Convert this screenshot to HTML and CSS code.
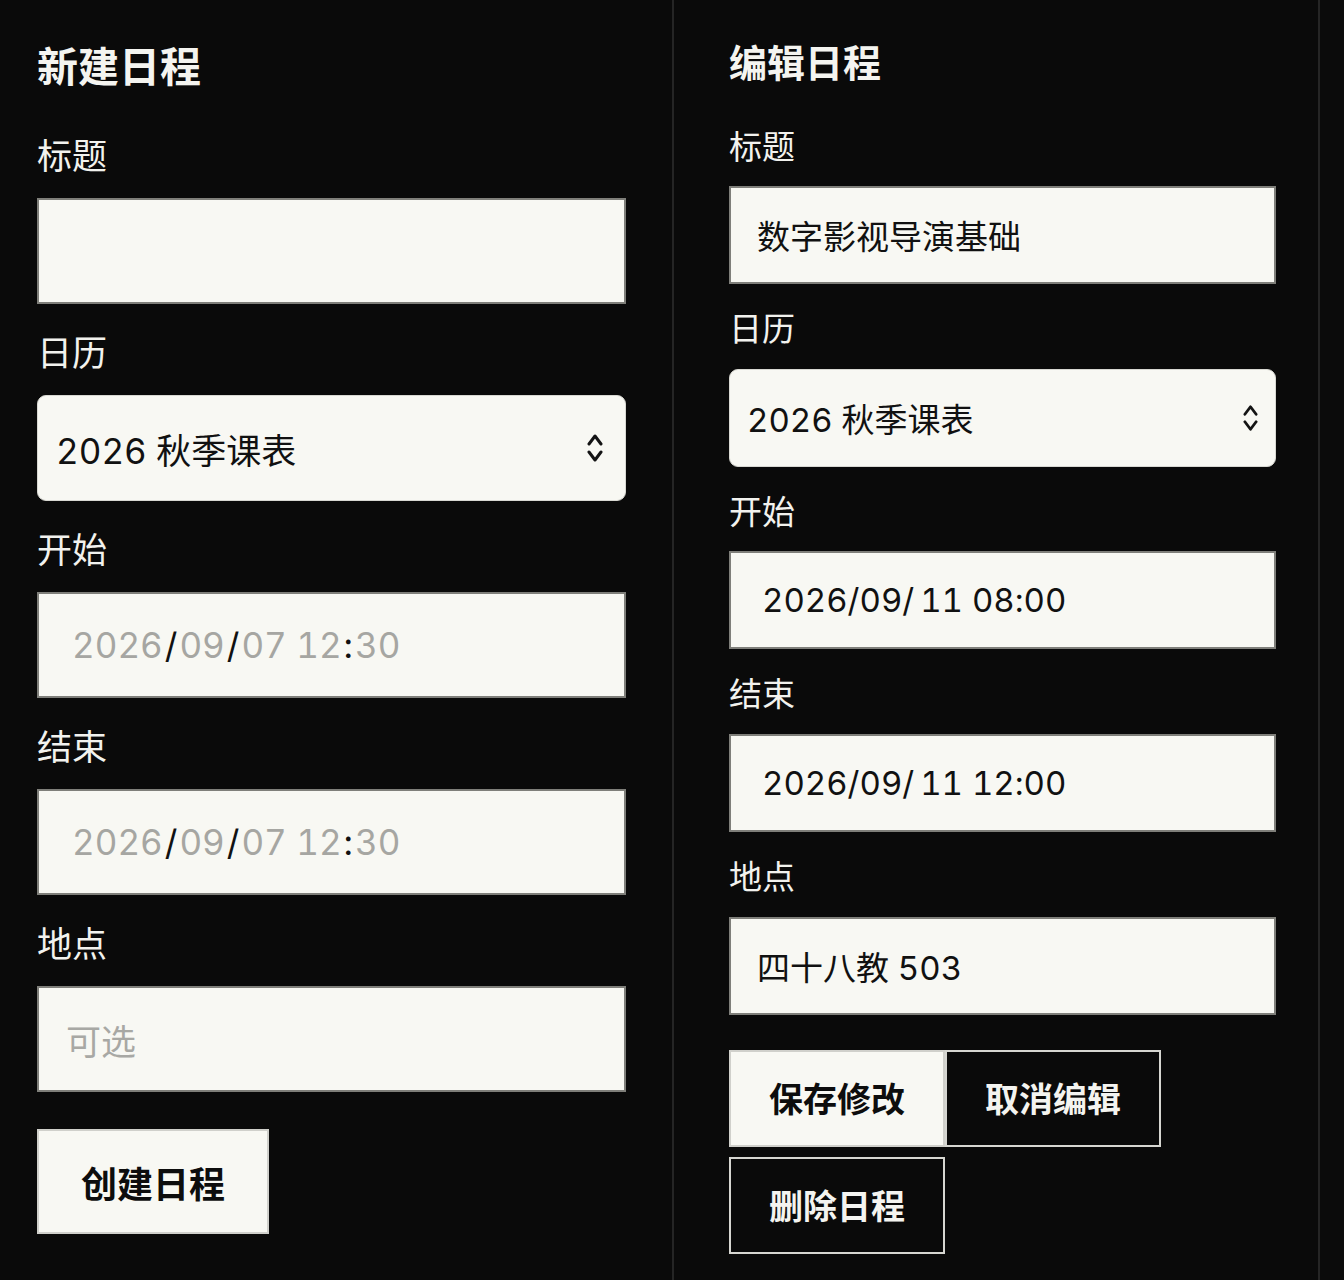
FILE: index.html
```html
<!DOCTYPE html>
<html lang="zh-CN">
<head>
<meta charset="utf-8">
<title>日程</title>
<link rel="stylesheet" href="styles.css">
</head>
<body>
<main class="page">
  <section class="panel panel-new">
    <h2 class="panel-title">新建日程</h2>
    <div class="form">
      <div class="field">
        <span class="field-label">标题</span>
        <div class="control"></div>
      </div>
      <div class="field">
        <span class="field-label">日历</span>
        <div class="control control-select">
          <span>2026 秋季课表</span>
          <svg class="chevrons" viewBox="0 0 16 32" aria-hidden="true"><path d="M2 12 L8 4 L14 12 M2 20 L8 28 L14 20"/></svg>
        </div>
      </div>
      <div class="field">
        <span class="field-label">开始</span>
        <div class="control control-date is-empty"><span class="seg">2026</span><span class="sep">/</span><span class="seg">09</span><span class="sep">/</span><span class="seg">07</span><span class="gap"> </span><span class="seg">12</span><span class="sep">:</span><span class="seg">30</span></div>
      </div>
      <div class="field">
        <span class="field-label">结束</span>
        <div class="control control-date is-empty"><span class="seg">2026</span><span class="sep">/</span><span class="seg">09</span><span class="sep">/</span><span class="seg">07</span><span class="gap"> </span><span class="seg">12</span><span class="sep">:</span><span class="seg">30</span></div>
      </div>
      <div class="field">
        <span class="field-label">地点</span>
        <div class="control"><span class="placeholder">可选</span></div>
      </div>
      <div class="actions">
        <button class="btn btn-light">创建日程</button>
      </div>
    </div>
  </section>

  <section class="panel panel-edit">
    <h2 class="panel-title">编辑日程</h2>
    <div class="form">
      <div class="field">
        <span class="field-label">标题</span>
        <div class="control"><span>数字影视导演基础</span></div>
      </div>
      <div class="field">
        <span class="field-label">日历</span>
        <div class="control control-select">
          <span>2026 秋季课表</span>
          <svg class="chevrons" viewBox="0 0 16 32" aria-hidden="true"><path d="M2 12 L8 4 L14 12 M2 20 L8 28 L14 20"/></svg>
        </div>
      </div>
      <div class="field">
        <span class="field-label">开始</span>
        <div class="control control-date"><span class="seg">2026</span><span class="sep">/</span><span class="seg">09</span><span class="sep">/</span><span class="seg seg-day">11</span><span class="gap"> </span><span class="seg">08</span><span class="sep">:</span><span class="seg">00</span></div>
      </div>
      <div class="field">
        <span class="field-label">结束</span>
        <div class="control control-date"><span class="seg">2026</span><span class="sep">/</span><span class="seg">09</span><span class="sep">/</span><span class="seg seg-day">11</span><span class="gap"> </span><span class="seg">12</span><span class="sep">:</span><span class="seg">00</span></div>
      </div>
      <div class="field">
        <span class="field-label">地点</span>
        <div class="control"><span>四十八教 503</span></div>
      </div>
      <div class="actions">
        <button class="btn btn-light">保存修改</button>
        <button class="btn btn-dark">取消编辑</button>
        <button class="btn btn-dark">删除日程</button>
      </div>
    </div>
  </section>

  <div class="gutter"></div>
</main>
</body>
</html>
```

FILE: styles.css
```css
* {
  box-sizing: border-box;
}

html, body {
  margin: 0;
  padding: 0;
  background: #0a0a0a;
}

body {
  font-family: Inter, "Noto Sans CJK SC", sans-serif;
  color: #f2f2ee;
}

.page {
  display: grid;
  grid-template-columns: 674px 646px 1fr;
  min-height: 1280px;
}

.panel {
  border-right: 2px solid #252525;
  display: flex;
  flex-direction: column;
}

.panel-new {
  --title-fs: 41px;
  --fs: 35px;
  --btn-fs: 36px;
  --ctl-h: 106px;
  --label-gap: 23px;
  --field-gap: 26px;
  --in-pad: 27px;
  --date-pad: 33px;
  --sel-pad: 18px;
  --sel-pad-r: 22px;
  --chev-w: 16px;
  --chev-h: 32px;
  --btn-h: 105px;
  --btn-pad: 42px;
  --title-gap: 44px;
  --actions-gap: 11px;
  --sep-space: 2px;
  padding: 40px 46px 0 37px;
}

.panel-edit {
  --title-fs: 38px;
  --fs: 33px;
  --btn-fs: 34px;
  --ctl-h: 98px;
  --label-gap: 21px;
  --field-gap: 24px;
  --in-pad: 26px;
  --date-pad: 31px;
  --sel-pad: 17px;
  --sel-pad-r: 17px;
  --chev-w: 15px;
  --chev-h: 30px;
  --btn-h: 97px;
  --btn-pad: 38px;
  --title-gap: 42px;
  --actions-gap: 11px;
  --sep-space: 0px;
  padding: 38px 42px 0 55px;
}

.panel-title {
  margin: 0 0 var(--title-gap);
  font-family: "Noto Sans CJK SC", sans-serif;
  font-size: var(--title-fs);
  line-height: 1.2;
  font-weight: 700;
  color: #f4f4f0;
}

.form {
  display: flex;
  flex-direction: column;
  gap: var(--field-gap);
}

.field {
  display: flex;
  flex-direction: column;
  gap: var(--label-gap);
}

.field-label {
  font-family: "Noto Sans CJK SC", sans-serif;
  font-size: var(--fs);
  line-height: 1.2;
  color: #f2f2ee;
}

.control {
  height: var(--ctl-h);
  width: 100%;
  background: #f8f8f3;
  border: 2px solid #7f7f7a;
  display: flex;
  align-items: center;
  padding: 0 var(--in-pad);
  font-size: var(--fs);
  color: #111;
  font-variant-numeric: tabular-nums;
  white-space: pre;
}

.placeholder {
  color: #a8a8a4;
}

.control-select {
  border: 1px solid #d8d8d2;
  border-radius: 9px;
  padding: 0 var(--sel-pad-r) 0 var(--sel-pad);
  justify-content: space-between;
}

.chevrons {
  width: var(--chev-w);
  height: var(--chev-h);
  fill: none;
  stroke: #141414;
  stroke-width: 3;
  stroke-linecap: round;
  stroke-linejoin: round;
}

.control-date {
  padding-left: var(--date-pad);
}

.control-date .sep {
  margin: 0 var(--sep-space);
  color: #111;
}

.control-date .seg-day {
  margin-left: 6px;
}

.control-date.is-empty .seg {
  color: #a6a6a2;
}

.actions {
  margin-top: var(--actions-gap);
  display: flex;
  flex-wrap: wrap;
  row-gap: 10px;
  column-gap: 0;
}

.btn {
  height: var(--btn-h);
  padding: 0 var(--btn-pad);
  font-family: "Noto Sans CJK SC", sans-serif;
  font-size: var(--btn-fs);
  font-weight: 700;
  line-height: 1;
  cursor: pointer;
  border-radius: 0;
}

.btn-light {
  background: #f8f8f3;
  color: #0d0d0d;
  border: 2px solid #d0d0cb;
}

.btn-dark {
  background: #0a0a0a;
  color: #f4f4f0;
  border: 2px solid #d6d6d1;
}

.gutter {
  background: #0b0b0b;
}
```
